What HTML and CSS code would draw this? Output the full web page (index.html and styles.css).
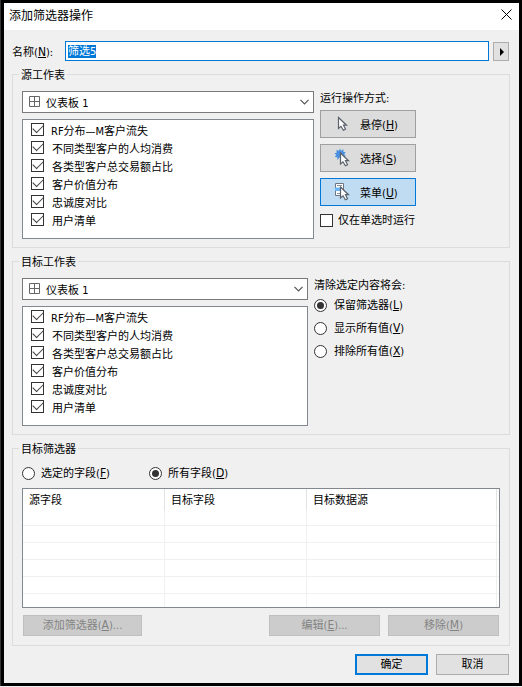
FILE: index.html
```
<!DOCTYPE html>
<html lang="zh-CN">
<head>
    <meta charset="UTF-8">
    <meta name="viewport" content="width=device-width, initial-scale=1.0">
    <title>添加筛选器操作</title>
    <link rel="stylesheet" href="styles.css">
</head>
<body>
    <div class="dialog">
        <header class="titlebar">
            <h1>添加筛选器操作</h1>
            <svg class="close" width="11" height="11" viewBox="0 0 11 11"><path d="M.5 .5l10 10M10.5 .5l-10 10" stroke="#000" fill="none"/></svg>
        </header>
        <form>
            <div class="name-row">
                <label>名称(<u>N</u>):</label>
                <div class="name-input"><span>筛选5</span></div>
                <button type="button" class="insert"><svg width="4" height="8" viewBox="0 0 4 8"><path d="M0 0l4 4-4 4z"/></svg></button>
            </div>

            <fieldset class="source">
                <legend>源工作表</legend>
                <div class="sheets">
                    <div class="select">
                        <svg width="11" height="11" viewBox="0 0 11 11"><path d="M.5 .5h10v10H.5zM5.5 .5v10M.5 5.5h10" stroke="#666" fill="none"/></svg>
                        <span>仪表板 1</span>
                        <svg class="arrow" width="9" height="6" viewBox="0 0 9 6"><path d="M.5 .8l4 4 4-4" stroke="#555" stroke-width="1.2" fill="none"/></svg>
                    </div>
                    <ul class="list">
                        <li class="first"><i class="check on"></i>RF分布—M客户流失</li>
                        <li><i class="check on"></i>不同类型客户的人均消费</li>
                        <li><i class="check on"></i>各类型客户总交易额占比</li>
                        <li><i class="check on"></i>客户价值分布</li>
                        <li><i class="check on"></i>忠诚度对比</li>
                        <li><i class="check on"></i>用户清单</li>
                    </ul>
                </div>
                <div class="side run">
                    <p>运行操作方式:</p>
                    <button type="button" class="mode">
                        <svg width="16" height="20" viewBox="0 0 16 20">
                            <path d="M4.5 3.5v11l2.5-2.2 2.4 3.9 2.1-1-2-4h3z" fill="#fff" stroke="#59616b" stroke-width="1.2"/>
                        </svg>
                        <span>悬停(<u>H</u>)</span>
                    </button>
                    <button type="button" class="mode">
                        <svg width="16" height="20" viewBox="0 0 16 20">
                            <path d="M6 .5l1 2.3L9.5 1.3l-.2 2.5 2.5.4-1.6 2 1.6 2-2.8.6L5.5 9.5 3.5 12 3.3 9.3.7 9l1.5-2L.5 5.3l2.3-.8L2.3 2l2.5.8z" fill="#4a90e2"/>
                            <path d="M6.5 5v11l2.5-2.2 2.4 3.9 2.1-1-2-4h3z" fill="#fff" stroke="#59616b" stroke-width="1.2"/>
                        </svg>
                        <span>选择(<u>S</u>)</span>
                    </button>
                    <button type="button" class="mode active">
                        <svg width="16" height="20" viewBox="0 0 16 20">
                            <path d="M1.5 1.5h8v12h-8z" fill="#fff" stroke="#6b7480"/>
                            <path d="M3 3.5h5M3 11.5h3" stroke="#8b949e"/>
                            <path d="M1 5.5h7v3.5H1z" fill="#6bb5f5"/>
                            <path d="M6.5 5v11l2.5-2.2 2.4 3.9 2.1-1-2-4h3z" fill="#fff" stroke="#59616b" stroke-width="1.2"/>
                        </svg>
                        <span>菜单(<u>U</u>)</span>
                    </button>
                    <label class="single"><i class="check"></i>仅在单选时运行</label>
                </div>
            </fieldset>

            <fieldset class="target">
                <legend>目标工作表</legend>
                <div class="sheets">
                    <div class="select">
                        <svg width="11" height="11" viewBox="0 0 11 11"><path d="M.5 .5h10v10H.5zM5.5 .5v10M.5 5.5h10" stroke="#666" fill="none"/></svg>
                        <span>仪表板 1</span>
                        <svg class="arrow" width="9" height="6" viewBox="0 0 9 6"><path d="M.5 .8l4 4 4-4" stroke="#555" stroke-width="1.2" fill="none"/></svg>
                    </div>
                    <ul class="list">
                        <li class="first"><i class="check on"></i>RF分布—M客户流失</li>
                        <li><i class="check on"></i>不同类型客户的人均消费</li>
                        <li><i class="check on"></i>各类型客户总交易额占比</li>
                        <li><i class="check on"></i>客户价值分布</li>
                        <li><i class="check on"></i>忠诚度对比</li>
                        <li><i class="check on"></i>用户清单</li>
                    </ul>
                </div>
                <div class="side clear">
                    <p>清除选定内容将会:</p>
                    <label><i class="radio on"></i><span>保留筛选器(<u>L</u>)</span></label>
                    <label><i class="radio"></i><span>显示所有值(<u>V</u>)</span></label>
                    <label><i class="radio"></i><span>排除所有值(<u>X</u>)</span></label>
                </div>
            </fieldset>

            <fieldset class="filters">
                <legend>目标筛选器</legend>
                <div class="scope">
                    <label><i class="radio"></i><span>选定的字段(<u>F</u>)</span></label>
                    <label><i class="radio on"></i><span>所有字段(<u>D</u>)</span></label>
                </div>
                <div class="table">
                    <div class="row head"><span>源字段</span><span>目标字段</span><span>目标数据源</span></div>
                    <div class="row tall"><span></span><span></span><span></span></div>
                    <div class="row"><span></span><span></span><span></span></div>
                    <div class="row"><span></span><span></span><span></span></div>
                    <div class="row"><span></span><span></span><span></span></div>
                    <div class="row"><span></span><span></span><span></span></div>
                    <div class="row"><span></span><span></span><span></span></div>
                </div>
                <div class="actions">
                    <button type="button" class="add" disabled>添加筛选器(<u>A</u>)...</button>
                    <button type="button" disabled>编辑(<u>E</u>)...</button>
                    <button type="button" disabled>移除(<u>M</u>)</button>
                </div>
            </fieldset>

            <div class="footer">
                <button type="button" class="ok">确定</button>
                <button type="button">取消</button>
            </div>
        </form>
    </div>
</body>
</html>
```
FILE: styles.css
```
* {
    box-sizing: border-box;
}

body {
    margin: 0;
    height: 687px;
    padding: 3px 3px 0 1px;
    background: linear-gradient(#000, #000) 1px 0 / 521px 686px no-repeat #333;
    border-bottom: 1px solid #eee;
    font: 11px/13px "DejaVu Sans Condensed", "Noto Sans CJK SC", sans-serif;
    color: #000;
    overflow: hidden;
}

.dialog {
    width: 515px;
    height: 680px;
    margin-left: 3px;
    background-color: #f0f0f0;
}

.titlebar {
    height: 27px;
    padding: 0 7px 0 5px;
    background-color: #fff;
    display: flex;
    align-items: center;
    justify-content: space-between;
}

h1 {
    margin: 0 0 1px;
    font-size: 12px;
    line-height: 16px;
    font-weight: normal;
}

.close {
    margin-bottom: 4px;
}

form {
    padding: 11px 9px 0 8px;
}

u {
    font-size: 12px;
    line-height: 1;
    text-underline-offset: 1px;
}

p {
    margin: 0;
}

button {
    font: inherit;
    color: #000;
    padding: 0;
    border: 1px solid #adadad;
    background-color: #e1e1e1;
}

.name-row {
    display: flex;
    height: 20px;
    margin-bottom: 7px;
}

.name-row label {
    width: 53px;
    padding-top: 5px;
}

.name-input {
    width: 424px;
    height: 20px;
    padding: 3px 2px;
    border: 1px solid #0078d7;
    background-color: #fff;
}

.name-input span {
    display: inline-block;
    height: 13px;
    line-height: 14px;
    background-color: #0078d7;
    color: #fff;
}

.insert {
    width: 16px;
    height: 19px;
    margin: 1px 0 0 4px;
    padding-left: 2px;
    display: flex;
    align-items: center;
    justify-content: center;
}

fieldset {
    width: 498px;
    margin: 0 0 7px;
    padding: 0 9px;
    border: 1px solid #dcdcdc;
    display: flex;
}

legend {
    height: 13px;
    line-height: 15px;
    margin-left: -3px;
    padding: 0 2px;
}

.source,
.target {
    height: 180px;
}

.sheets {
    width: 292px;
    padding-top: 10px;
}

.target .sheets {
    width: 286px;
}

.select {
    height: 22px;
    padding: 0 4px 0 6px;
    border: 1px solid #7a7a7a;
    background-color: #fff;
    display: flex;
    align-items: center;
}

.select svg {
    margin-bottom: 1px;
}

.select .arrow {
    margin-bottom: 0;
}

.select span {
    flex: 1;
    padding: 2px 0 0 6px;
}

.list {
    height: 120px;
    margin: 6px 0 0;
    padding: 2px 0 0 8px;
    border: 1px solid #828790;
    background-color: #fff;
    list-style: none;
}

.list li {
    height: 18px;
    display: flex;
    align-items: center;
    gap: 8px;
    padding-top: 1px;
}

.list .first {
    gap: 7px;
}

.list .check {
    margin-bottom: 4px;
}

.check,
.radio {
    width: 13px;
    height: 13px;
    flex: none;
    border: 1px solid #333;
    background-color: #fff;
}

.check.on::after {
    content: "";
    display: block;
    width: 9px;
    height: 5px;
    margin: 1px 0 0 1px;
    border: solid #444;
    border-width: 0 0 1px 1px;
    transform: translateY(-.5px) rotate(-45deg);
}

.radio {
    border-radius: 50%;
}

.radio.on::after {
    content: "";
    display: block;
    width: 7px;
    height: 7px;
    margin: 2px;
    border-radius: 50%;
    background-color: #333;
}

.side {
    padding: 11px 0 0 6px;
}

.side p {
    height: 18px;
}

.side label,
.scope label {
    display: flex;
    align-items: center;
}

.mode {
    display: flex;
    align-items: center;
    width: 96px;
    height: 28px;
    padding-left: 13px;
    margin-bottom: 6px;
    border-color: #a0a0a0;
    background-color: #dcdcdc;
}

.mode span {
    margin: 2px 0 0 10px;
}

.mode.active {
    border-color: #0078d7;
    background-color: #c0dcf3;
}

.single {
    gap: 5px;
    padding-top: 2px;
}

.clear p {
    height: 20px;
}

.clear label {
    height: 13px;
    margin-bottom: 10px;
    gap: 7px;
}

.filters {
    display: block;
    height: 204px;
    margin-bottom: 8px;
}

.scope {
    display: flex;
    padding-top: 12px;
}

.scope label {
    width: 127px;
    height: 13px;
    gap: 6px;
}

.table {
    width: 478px;
    height: 120px;
    margin-top: 8px;
    border: 1px solid #828790;
    background-color: #fff;
    overflow: hidden;
}

.row {
    display: grid;
    grid-template-columns: 142px 142px 190px;
    height: 17px;
    border-bottom: 1px solid #f0f0f0;
}

.row span {
    border-right: 1px solid #f0f0f0;
}

.head {
    height: 21px;
    border-bottom: none;
}

.head span {
    padding: 5px 0 0 6px;
    border-color: #e3e3e3;
}

.row.tall {
    height: 16px;
}

.actions {
    display: flex;
    gap: 8px;
    padding: 7px 0 0 1px;
}

.actions button {
    width: 111px;
    height: 21px;
    border-color: #bfbfbf;
    background-color: #ccc;
    color: #838383;
}

.actions .add {
    width: 119px;
    margin-right: 119px;
}

.footer {
    display: flex;
    justify-content: flex-end;
    gap: 8px;
    padding-right: 1px;
}

.footer button {
    width: 73px;
    height: 21px;
}

.footer .ok {
    border: 2px solid #0078d7;
}
```
